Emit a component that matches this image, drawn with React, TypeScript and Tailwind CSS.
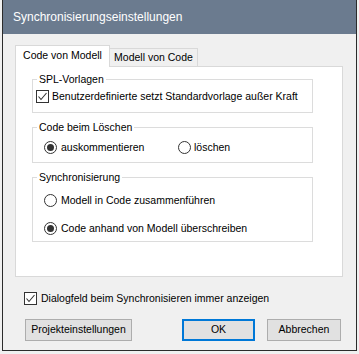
import React from 'react';

const font = { fontFamily: '"Liberation Sans", Arial, sans-serif' };

function CheckBox({ checked }: { checked?: boolean }) {
  return (
    <span className="inline-flex h-[13px] w-[13px] shrink-0 items-center justify-center border border-[#333] bg-white">
      {checked && (
        <svg width="11" height="11" viewBox="0 0 11 11">
          <polyline points="1.5,5.5 4,8.5 9.5,2" fill="none" stroke="#333" strokeWidth="1.1" />
        </svg>
      )}
    </span>
  );
}

function Radio({ checked }: { checked?: boolean }) {
  return (
    <span className="inline-flex h-[13px] w-[13px] shrink-0 items-center justify-center rounded-full border border-[#333] bg-white">
      {checked && <span className="h-[7px] w-[7px] rounded-full bg-[#333]" />}
    </span>
  );
}

function Group({ title, className, children }: { title: string; className?: string; children: React.ReactNode }) {
  return (
    <fieldset className={`border border-[#dcdcdc] ${className ?? ''}`}>
      <legend className="ml-[4px] px-[2px] text-[10.5px] leading-[13px]">{title}</legend>
      {children}
    </fieldset>
  );
}

export default function App() {
  return (
    <div className="h-[354px] w-[359px] bg-[#f0f0f0] text-[10.5px] text-black" style={font}>
      <div className="flex h-[351px] w-[355px] ml-[2px] flex-col border border-[#2b2b2b] border-t-0">
        {/* Title bar */}
        <div className="flex h-[34px] items-center bg-[#6b7b8f] pl-[10px] text-[12px] text-white">
          Synchronisierungseinstellungen
        </div>

        <div className="flex flex-1 flex-col bg-[#f0f0f0] px-[12px] pt-[11px]">
          {/* Tabs */}
          <div className="relative z-10 flex h-[21px] items-end">
            <div className="flex h-[22px] w-[95px] translate-y-[1px] items-center justify-center border border-b-0 border-[#d9d9d9] bg-white pb-[2px]">
              Code von Modell
            </div>
            <div className="flex h-[18px] w-[88px] items-center justify-center border border-l-0 border-b-0 border-[#d9d9d9] bg-[#f0f0f0]">
              Modell von Code
            </div>
          </div>

          {/* Panel */}
          <div className="flex h-[211px] w-[328px] flex-col border border-[#d9d9d9] bg-white pl-[16px] pt-[6px]">
            <Group title="SPL-Vorlagen" className="h-[40px] w-[281px]">
              <label className="flex items-center gap-[3px] pl-[3px] pt-[3px]">
                <CheckBox checked />
                <span>Benutzerdefinierte setzt Standardvorlage außer Kraft</span>
              </label>
            </Group>

            <Group title="Code beim Löschen" className="mt-[8px] h-[42px] w-[281px]">
              <div className="flex items-center pl-[11px] pt-[6px]">
                <label className="flex w-[134px] items-center gap-[4px]">
                  <Radio checked />
                  <span>auskommentieren</span>
                </label>
                <label className="flex items-center gap-[3px]">
                  <Radio />
                  <span>löschen</span>
                </label>
              </div>
            </Group>

            <Group title="Synchronisierung" className="mt-[8px] h-[71px] w-[281px]">
              <div className="flex flex-col gap-[12px] pl-[11px] pt-[9px]">
                <label className="flex items-center gap-[4px]">
                  <Radio />
                  <span>Modell in Code zusammenführen</span>
                </label>
                <label className="flex items-center gap-[4px]">
                  <Radio checked />
                  <span>Code anhand von Modell überschreiben</span>
                </label>
              </div>
            </Group>
          </div>

          {/* Bottom checkbox */}
          <label className="mt-[14px] flex items-center gap-[4px] pl-[9px]">
            <CheckBox checked />
            <span>Dialogfeld beim Synchronisieren immer anzeigen</span>
          </label>

          {/* Buttons */}
          <div className="mt-[12px] flex items-center pl-[10px]">
            <button className="h-[22px] w-[107px] border border-[#adadad] bg-[#e1e1e1]">Projekteinstellungen</button>
            <button className="ml-[50px] h-[22px] w-[73px] border-2 border-[#0078d7] bg-[#e1e1e1]">OK</button>
            <button className="ml-[12px] h-[22px] w-[74px] border border-[#adadad] bg-[#e1e1e1]">Abbrechen</button>
          </div>
        </div>
      </div>
    </div>
  );
}
